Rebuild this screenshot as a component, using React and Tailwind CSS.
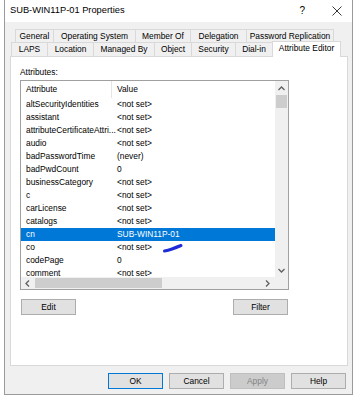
import React from "react";

const topTabs = [
  { label: "General", w: 39 },
  { label: "Operating System", w: 83 },
  { label: "Member Of", w: 56 },
  { label: "Delegation", w: 57 },
  { label: "Password Replication", w: 88 },
];

const bottomTabs = [
  { label: "LAPS", w: 37 },
  { label: "Location", w: 47 },
  { label: "Managed By", w: 62 },
  { label: "Object", w: 38 },
  { label: "Security", w: 45 },
  { label: "Dial-in", w: 38 },
];

const rows = [
  ["altSecurityIdentities", "<not set>"],
  ["assistant", "<not set>"],
  ["attributeCertificateAttri...", "<not set>"],
  ["audio", "<not set>"],
  ["badPasswordTime", "(never)"],
  ["badPwdCount", "0"],
  ["businessCategory", "<not set>"],
  ["c", "<not set>"],
  ["carLicense", "<not set>"],
  ["catalogs", "<not set>"],
  ["cn", "SUB-WIN11P-01"],
  ["co", "<not set>"],
  ["codePage", "0"],
  ["comment", "<not set>"],
];

function Tab({ label, w }) {
  return (
    <div
      className="flex items-center justify-center border-t border-l border-r border-[#d9d9d9] bg-[#f0f0f0] h-full -mr-px"
      style={{ width: w }}
    >
      {label}
    </div>
  );
}

function Button({ children, primary, disabled }) {
  return (
    <div
      className={`w-[55px] h-[16px] flex items-center justify-center border ${
        primary ? "border-[#0078d7]" : disabled ? "border-[#bfbfbf]" : "border-[#adadad]"
      } ${disabled ? "bg-[#cccccc] text-[#838383]" : "bg-[#e1e1e1] text-black"}`}
    >
      {children}
    </div>
  );
}

export default function App() {
  return (
    <div
      className="w-[361px] h-[400px] bg-white pl-[4px] text-[8.4px] text-black leading-none"
      style={{ fontFamily: '"Liberation Sans", Arial, sans-serif' }}
    >
      <div className="w-[349px] h-[395px] border-l border-r border-b border-[#9a9a9a] bg-[#f0f0f0] flex flex-col">
        {/* title bar */}
        <div className="h-[22px] bg-white flex items-center pl-[5px] relative">
          <span className="text-[9.3px]">SUB-WIN11P-01 Properties</span>
          <span className="ml-auto mr-[27px] text-[10px]">?</span>
          <svg width="10" height="10" viewBox="0 0 10 10" className="mr-[10px]">
            <path d="M0.5 0.5 L9.5 9.5 M9.5 0.5 L0.5 9.5" stroke="#222" strokeWidth="0.9" />
          </svg>
        </div>

        {/* tabs */}
        <div className="mt-[7px] h-[13px] flex pl-[10px]">
          {topTabs.map((t) => (
            <Tab key={t.label} {...t} />
          ))}
        </div>
        <div className="h-[14px] flex pl-[6px] items-end">
          {bottomTabs.map((t) => (
            <Tab key={t.label} {...t} />
          ))}
          <div className="w-[69px] h-[16px] -mt-[2px] bg-white border-t border-l border-r border-[#d9d9d9] flex items-center justify-center relative z-10 -mb-px pb-[2px]">
            Attribute Editor
          </div>
        </div>

        {/* panel */}
        <div className="ml-[5px] w-[338px] h-[310px] bg-white border border-[#d9d9d9] pl-[9px] pt-[11px] flex flex-col">
          <div className="h-[8px]">Attributes:</div>
          <div className="mt-[4px] w-[269px] h-[210px] border border-[#a0a0a0] relative flex flex-col">
            <div className="flex flex-1 min-h-0">
              <div className="flex-1 min-w-0 flex flex-col overflow-hidden">
                <div className="h-[17px] flex items-center shrink-0">
                  <div className="w-[91px] pl-[5px] border-r border-[#e5e5e5] h-full flex items-center">
                    Attribute
                  </div>
                  <div className="pl-[5px]">Value</div>
                </div>
                {rows.map(([a, v]) => {
                  const sel = a === "cn";
                  return (
                    <div
                      key={a}
                      className={`h-[13px] shrink-0 flex items-center ${
                        sel ? "bg-[#0078d7] text-white" : ""
                      }`}
                    >
                      <div className="w-[91px] pl-[5px] whitespace-nowrap">{a}</div>
                      <div className="pl-[5px] whitespace-nowrap">{v}</div>
                    </div>
                  );
                })}
              </div>
              {/* vertical scrollbar */}
              <div className="w-[13px] bg-[#f0f0f0] flex flex-col items-center">
                <svg width="7" height="5" viewBox="0 0 7 5" className="mt-[5px]">
                  <path d="M0.5 4 L3.5 1 L6.5 4" stroke="#606060" strokeWidth="1.3" fill="none" />
                </svg>
                <div className="mt-[4px] w-[11px] h-[13px] bg-[#cdcdcd]" />
                <svg width="7" height="5" viewBox="0 0 7 5" className="mt-auto mb-[4px]">
                  <path d="M0.5 1 L3.5 4 L6.5 1" stroke="#606060" strokeWidth="1.3" fill="none" />
                </svg>
              </div>
            </div>
            {/* horizontal scrollbar */}
            <div className="h-[12px] flex shrink-0">
              <div className="flex-1 bg-[#f0f0f0] flex items-center">
                <svg width="5" height="7" viewBox="0 0 5 7" className="ml-[4px]">
                  <path d="M4 0.5 L1 3.5 L4 6.5" stroke="#606060" strokeWidth="1.3" fill="none" />
                </svg>
                <div className="ml-[5px] w-[127px] h-[10px] bg-[#cdcdcd]" />
                <svg width="5" height="7" viewBox="0 0 5 7" className="ml-auto mr-[5px]">
                  <path d="M1 0.5 L4 3.5 L1 6.5" stroke="#606060" strokeWidth="1.3" fill="none" />
                </svg>
              </div>
              <div className="w-[13px] bg-[#f0f0f0]" />
            </div>
            {/* annotation scribble */}
            <svg
              width="24"
              height="14"
              viewBox="0 0 24 14"
              className="absolute left-[141px] top-[160px]"
            >
              <path
                d="M2.5 10 Q6 9.5 10 8 T19 4.5"
                stroke="#1f2bd6"
                strokeWidth="3"
                strokeLinecap="round"
                fill="none"
              />
            </svg>
          </div>
          <div className="mt-[9px] flex">
            <div className="ml-[1px]">
              <Button>Edit</Button>
            </div>
            <div className="ml-[157px]">
              <Button>Filter</Button>
            </div>
          </div>
        </div>

        {/* bottom buttons */}
        <div className="mt-[7px] flex justify-end gap-[6px] pr-[6px]">
          <Button primary>OK</Button>
          <Button>Cancel</Button>
          <Button disabled>Apply</Button>
          <Button>Help</Button>
        </div>
      </div>
    </div>
  );
}
